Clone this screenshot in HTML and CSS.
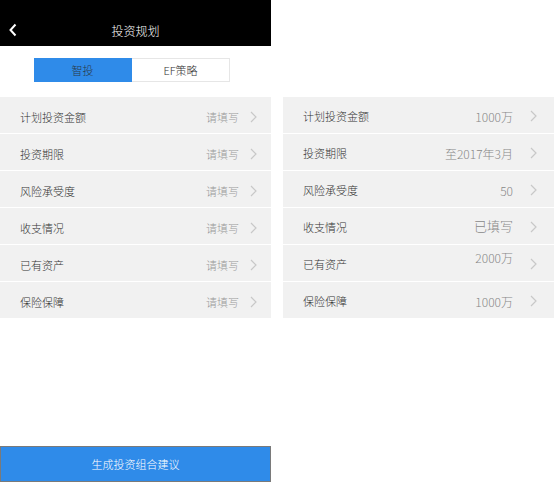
FILE: index.html
```html
<!DOCTYPE html>
<html lang="zh">
<head>
<meta charset="utf-8">
<link rel="stylesheet" href="styles.css">
</head>
<body>
<div class="page">
  <div class="phone">
    <div class="header">
      <svg class="back" width="10" height="14" viewBox="0 0 10 14"><path d="M7.5 1.5 L2.5 7 L7.5 12.5" fill="none" stroke="#fff" stroke-width="2"/></svg>
      <span class="title">投资规划</span>
    </div>
    <div class="tabs">
      <div class="tab active">智投</div>
      <div class="tab">EF策略</div>
    </div>
    <div class="list">
      <div class="row"><span class="label">计划投资金额</span><span class="value">请填写</span><svg class="chev" width="7" height="12" viewBox="0 0 7 12"><path d="M1 1 L6 6 L1 11" fill="none" stroke="#c8c8c8" stroke-width="1.2"/></svg></div>
      <div class="row"><span class="label">投资期限</span><span class="value">请填写</span><svg class="chev" width="7" height="12" viewBox="0 0 7 12"><path d="M1 1 L6 6 L1 11" fill="none" stroke="#c8c8c8" stroke-width="1.2"/></svg></div>
      <div class="row"><span class="label">风险承受度</span><span class="value">请填写</span><svg class="chev" width="7" height="12" viewBox="0 0 7 12"><path d="M1 1 L6 6 L1 11" fill="none" stroke="#c8c8c8" stroke-width="1.2"/></svg></div>
      <div class="row"><span class="label">收支情况</span><span class="value">请填写</span><svg class="chev" width="7" height="12" viewBox="0 0 7 12"><path d="M1 1 L6 6 L1 11" fill="none" stroke="#c8c8c8" stroke-width="1.2"/></svg></div>
      <div class="row"><span class="label">已有资产</span><span class="value">请填写</span><svg class="chev" width="7" height="12" viewBox="0 0 7 12"><path d="M1 1 L6 6 L1 11" fill="none" stroke="#c8c8c8" stroke-width="1.2"/></svg></div>
      <div class="row"><span class="label">保险保障</span><span class="value">请填写</span><svg class="chev" width="7" height="12" viewBox="0 0 7 12"><path d="M1 1 L6 6 L1 11" fill="none" stroke="#c8c8c8" stroke-width="1.2"/></svg></div>
    </div>
    <div class="submit">生成投资组合建议</div>
  </div>
  <div class="side">
    <div class="list list-filled">
      <div class="row"><span class="label">计划投资金额</span><span class="value">1000万</span><svg class="chev" width="7" height="12" viewBox="0 0 7 12"><path d="M1 1 L6 6 L1 11" fill="none" stroke="#c8c8c8" stroke-width="1.2"/></svg></div>
      <div class="row"><span class="label">投资期限</span><span class="value">至2017年3月</span><svg class="chev" width="7" height="12" viewBox="0 0 7 12"><path d="M1 1 L6 6 L1 11" fill="none" stroke="#c8c8c8" stroke-width="1.2"/></svg></div>
      <div class="row"><span class="label">风险承受度</span><span class="value">50</span><svg class="chev" width="7" height="12" viewBox="0 0 7 12"><path d="M1 1 L6 6 L1 11" fill="none" stroke="#c8c8c8" stroke-width="1.2"/></svg></div>
      <div class="row"><span class="label">收支情况</span><span class="value value-big">已填写</span><svg class="chev" width="7" height="12" viewBox="0 0 7 12"><path d="M1 1 L6 6 L1 11" fill="none" stroke="#c8c8c8" stroke-width="1.2"/></svg></div>
      <div class="row"><span class="label">已有资产</span><span class="value value-up">2000万</span><svg class="chev" width="7" height="12" viewBox="0 0 7 12"><path d="M1 1 L6 6 L1 11" fill="none" stroke="#c8c8c8" stroke-width="1.2"/></svg></div>
      <div class="row"><span class="label">保险保障</span><span class="value">1000万</span><svg class="chev" width="7" height="12" viewBox="0 0 7 12"><path d="M1 1 L6 6 L1 11" fill="none" stroke="#c8c8c8" stroke-width="1.2"/></svg></div>
    </div>
  </div>
</div>
</body>
</html>
```
FILE: styles.css
```css
* { box-sizing: border-box; }
html, body { margin: 0; padding: 0; background: #fff; }
body {
  font-family: "Noto Sans CJK SC", "Liberation Sans", sans-serif;
  font-weight: 300;
  color: #333;
}
.page {
  display: flex;
  width: 554px;
  height: 482px;
}
.phone {
  width: 271px;
  height: 482px;
  display: flex;
  flex-direction: column;
}
.header {
  height: 46px;
  background: #000;
  display: flex;
  align-items: center;
  justify-content: center;
  position: relative;
  padding-top: 14px;
}
.back {
  position: absolute;
  left: 8px;
  top: 23px;
}
.title {
  color: #fff;
  font-size: 12px;
}
.tabs {
  margin: 12px 0 0 34px;
  display: flex;
  width: 196px;
  height: 24px;
}
.tab {
  flex: 1;
  display: flex;
  align-items: center;
  justify-content: center;
  font-size: 11px;
  border: 1px solid #e6e6e6;
  border-left: none;
  background: #fff;
  color: #333;
}
.tab.active {
  background: #2f8be9;
  border-color: #2f8be9;
  color: #2a3a4a;
}
.list {
  margin-top: 15px;
  display: flex;
  flex-direction: column;
  gap: 1px;
  background: #fff;
}
.row {
  height: 36px;
  background: #f1f1f1;
  display: flex;
  align-items: center;
  padding: 4px 14px 0 20px;
}
.label {
  flex: 1;
  font-size: 11px;
  color: #333;
}
.value {
  font-size: 11px;
  color: #999;
  margin-right: 11px;
}
.chev { display: block; }
.submit {
  margin-top: auto;
  height: 36px;
  background: #2f8be9;
  border: 1px solid #7a7a7a;
  color: #fff;
  font-size: 11px;
  display: flex;
  align-items: center;
  justify-content: center;
}
.side {
  margin-left: 12px;
  width: 271px;
  padding-top: 82px;
}
.list-filled .row {
  padding: 2px 17px 0 20px;
}
.list-filled .value {
  font-size: 12px;
  color: #888;
  margin-right: 17px;
}
.list-filled .value-big { font-size: 13px; margin-top: -4px; }
.list-filled .value-up { margin-top: -14px; }
```
